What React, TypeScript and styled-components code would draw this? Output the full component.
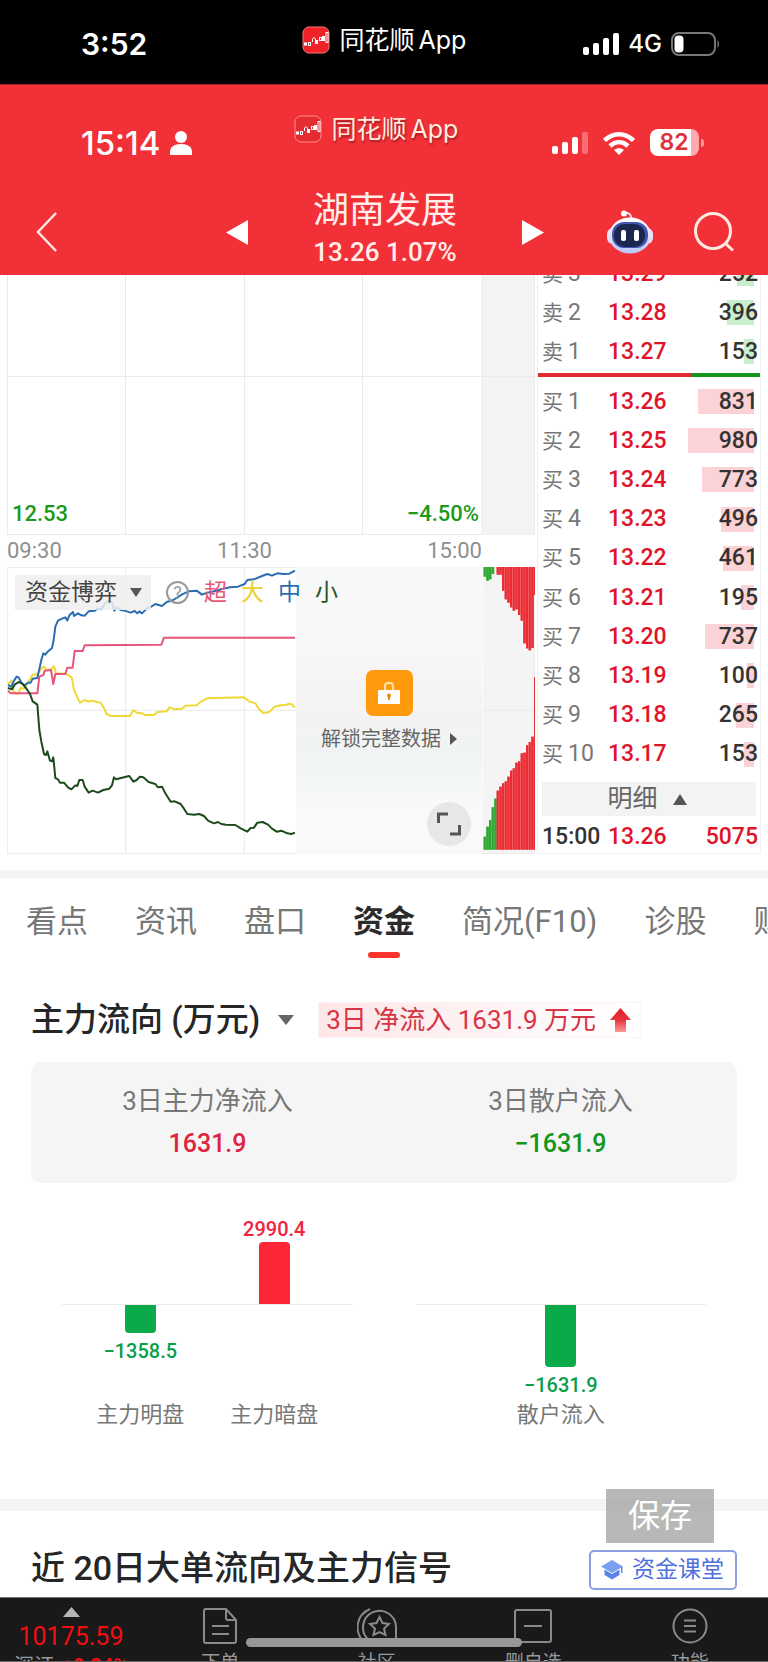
import React from 'react';
import styled, { createGlobalStyle } from 'styled-components';

const GlobalStyle = createGlobalStyle`
  * { box-sizing: border-box; }
  body {
    margin: 0;
    background: #fff;
    color: #333;
    font-family: Roboto, 'Noto Sans CJK SC', sans-serif;
  }
  button { border: 0; padding: 0; background: none; color: inherit; font: inherit; }
  h1, h2, p { margin: 0; font-weight: inherit; }
  svg { display: block; flex: none; }
`;

const Page = styled.div`
  min-height: 100vh;
  overflow: hidden;
  background: #fff;
`;

/* ---------- status bars and header ---------- */

const StatusRow = styled.div<{ $height: number; $top: number }>`
  display: grid;
  grid-template-columns: 1fr auto 1fr;
  align-items: center;
  height: ${(p) => p.$height}px;
  padding-top: ${(p) => p.$top}px;
  color: #fff;
`;

const DeviceBar = styled.div`
  background: #000;
`;

const Clock = styled.div<{ $weight: number; $size: number }>`
  display: flex;
  align-items: center;
  gap: 10px;
  padding-left: 81px;
  font: ${(p) => p.$weight} ${(p) => p.$size}px/32px Inter, sans-serif;
`;

const Brand = styled.div<{ $lift: number; $shift?: number; $faded?: boolean }>`
  display: flex;
  align-items: center;
  gap: 10px;
  padding-bottom: ${(p) => p.$lift}px;
  padding-right: ${(p) => p.$shift ?? 0}px;
  font: 400 25px/30px Inter, 'Noto Sans CJK SC', sans-serif;
  white-space: nowrap;
  color: ${(p) => (p.$faded ? '#ffeee0' : '#fff')};
  text-shadow: ${(p) => (p.$faded ? '1px 2px 2px rgba(110, 20, 20, 0.6)' : 'none')};
`;

const BrandName = styled.span`
  display: flex;
  gap: 4px;
`;

const Signals = styled.div<{ $right: number; $gap: number }>`
  display: flex;
  justify-content: flex-end;
  align-items: center;
  gap: ${(p) => p.$gap}px;
  padding-right: ${(p) => p.$right}px;
  font: 500 24px/28px Inter, sans-serif;
`;

const Header = styled.header`
  background: #f23038;
  color: #fff;
  border-top: 1px solid #a3242a;
`;

const TitleRow = styled.div`
  display: grid;
  grid-template-columns: 1fr 274px 1fr;
  align-items: center;
  height: 104px;
  padding: 12px 34px 0 36px;
`;

const Side = styled.div`
  display: flex;
  align-items: center;
  justify-content: space-between;
  padding-top: 6px;
`;

const Actions = styled.div`
  display: flex;
  align-items: center;
  gap: 40px;
`;

const Stock = styled.div`
  text-align: center;
  color: #ffeeea;
`;

const StockName = styled.h1`
  font-size: 36px;
  line-height: 46px;
`;

const StockQuote = styled.p`
  font-size: 26px;
  line-height: 36px;
  font-weight: 500;
`;

/* ---------- market area ---------- */

const Market = styled.section`
  display: grid;
  grid-template-columns: 528fr 224fr;
  column-gap: 2px;
  padding: 0 7px;
  margin-bottom: 16px;
`;

const PriceChart = styled.div`
  position: relative;
  height: 260px;
  display: flex;
  justify-content: space-between;
  align-items: flex-end;
  padding: 0 56px 6px 5px;
  color: #1a9a1a;
  font-size: 22px;
  font-weight: 500;
  line-height: 30px;
`;

const ChartCanvas = styled.svg`
  position: absolute;
  inset: 0;
  width: 100%;
  height: 100%;
  z-index: -1;
`;

const Layer = styled.div`
  position: relative;
  z-index: 0;
`;

const TimeAxis = styled.div`
  display: flex;
  justify-content: space-between;
  height: 32px;
  padding-right: 53px;
  color: #8f8f8f;
  font-size: 22px;
  line-height: 32px;
`;

const FundChart = styled.div`
  position: relative;
  height: 287px;
`;

const FundTools = styled.div`
  position: absolute;
  z-index: 2;
  top: 8px;
  left: 8px;
  display: flex;
  align-items: center;
  gap: 15px;
  font-size: 23px;
`;

const FundPicker = styled.button`
  display: flex;
  align-items: center;
  gap: 13px;
  height: 35px;
  padding: 0 9px 0 10px;
  background: rgba(238, 238, 238, 0.85);
  color: #444;
  line-height: 34px;
`;

const HelpMark = styled.button`
  width: 23px;
  height: 23px;
  border: 2px solid #999;
  border-radius: 50%;
  color: #999;
  font-size: 18px;
  line-height: 20px;
`;

const Legend = styled.div`
  display: flex;
  gap: 14px;
  line-height: 34px;
`;

const LegendKey = styled.span<{ $color: string }>`
  color: ${(p) => p.$color};
`;

const LockedArea = styled.div`
  position: absolute;
  top: 0;
  bottom: 0;
  left: 54.7%;
  right: 10%;
  display: flex;
  flex-direction: column;
  align-items: center;
  justify-content: center;
  gap: 8px;
  padding-top: 3px;
  background: linear-gradient(180deg, #f8f9fa 0%, #f9f7f7 25%, #f5f2f2 48%, #f0f4f4 66%, #f8f9f9 82%, #f9f9f9 100%);
`;

const UnlockButton = styled.button`
  display: flex;
  align-items: center;
  gap: 9px;
  color: #666;
  font-size: 20px;
  line-height: 30px;
  white-space: nowrap;
`;

const LockBadge = styled.div`
  display: grid;
  place-items: center;
  width: 47px;
  height: 46px;
  border-radius: 7px;
  background: #ff9a0c;
`;

const ExpandButton = styled.button`
  position: absolute;
  right: 11px;
  bottom: 8px;
  display: grid;
  place-items: center;
  width: 44px;
  height: 44px;
  border-radius: 50%;
  background: #e7e7e7;
`;

/* ---------- order book ---------- */

const Book = styled.div`
  display: flex;
  flex-direction: column;
  border: 1px solid #f0f0f0;
  border-width: 0 1px 1px;
`;

const SellClip = styled.div`
  display: flex;
  flex-direction: column;
  justify-content: flex-end;
  height: 96px;
  overflow: hidden;
`;

const BookTable = styled.table<{ $height: number }>`
  flex: none;
  width: 100%;
  height: ${(p) => p.$height}px;
  border-collapse: collapse;
  table-layout: fixed;
  font-size: 23px;
  td, th { padding: 0; text-align: left; font-weight: 500; line-height: 30px; }
`;

const LevelCell = styled.th<{ $strong?: boolean }>`
  width: 70px;
  && {
    padding-left: 4px;
    font-weight: ${(p) => (p.$strong ? 500 : 400)};
    color: ${(p) => (p.$strong ? '#333' : '#777')};
    white-space: nowrap;
  }
`;

const LevelName = styled.span`
  margin-right: 5px;
  font-size: 21px;
`;

const PriceCell = styled.td`
  color: #e01428;
`;

const VolumeCell = styled.td`
  color: #333;
`;

const Depth = styled.span<{ $tint: string }>`
  display: flex;
  justify-content: flex-end;
  align-items: center;
  height: 26px;
  padding-right: 2px;
  background-image: linear-gradient(${(p) => p.$tint}, ${(p) => p.$tint});
  background-repeat: no-repeat;
  background-position: right 6px center;
`;

const Ratio = styled.div`
  height: 4px;
  margin: 2px 0 5px;
  background: linear-gradient(90deg, #e02c34 69%, #12961c 69%);
`;

const DetailToggle = styled.button`
  display: flex;
  align-items: center;
  justify-content: center;
  gap: 15px;
  height: 34px;
  margin: 8px 4px 4px;
  padding-right: 4px;
  background: #f3f3f3;
  color: #666;
  font-size: 25px;
  line-height: 34px;
`;

const TradeTotal = styled.td`
  && { text-align: right; padding-right: 2px; }
  color: #e01428;
`;

/* ---------- fund section ---------- */

const Band = styled.div<{ $height: number }>`
  height: ${(p) => p.$height}px;
  background: #f4f4f4;
`;

const Tabs = styled.nav`
  display: flex;
  gap: 47px;
  padding-left: 26px;
  overflow: hidden;
`;

const Tab = styled.button<{ $active?: boolean }>`
  position: relative;
  flex: none;
  padding: 22px 0 14px;
  font-size: 31px;
  line-height: 44px;
  font-weight: ${(p) => (p.$active ? 700 : 400)};
  color: ${(p) => (p.$active ? '#2b2b2b' : '#777')};
  &::after {
    content: '';
    display: ${(p) => (p.$active ? 'block' : 'none')};
    position: absolute;
    bottom: 0;
    left: calc(50% - 16px);
    width: 32px;
    height: 6px;
    border-radius: 3px;
    background: #fb342c;
  }
`;

const FlowHeading = styled.div`
  display: flex;
  align-items: center;
  gap: 24px;
  margin: 44px 31px 24px;
  height: 36px;
  white-space: nowrap;
`;

const FlowPicker = styled.button`
  display: flex;
  align-items: center;
  gap: 18px;
  color: #262626;
  font-size: 33px;
  line-height: 36px;
  font-weight: 500;
`;

const FlowTag = styled.p`
  display: flex;
  align-items: center;
  gap: 14px;
  height: 36px;
  padding: 0 10px 0 7px;
  border: 1px solid #fdf2f3;
  background: linear-gradient(90deg, #fde6e8, #fff);
  color: #d83446;
  font-size: 26px;
  line-height: 34px;
`;

const Summary = styled.dl`
  display: grid;
  grid-template-columns: 1fr 1fr;
  margin: 0 31px;
  padding: 21px 0;
  border-radius: 10px;
  background: #f5f5f5;
  text-align: center;
  line-height: 36px;
`;

const SummaryLabel = styled.dt`
  color: #777;
  font-size: 26px;
`;

const Amount = styled.dd<{ $down?: boolean }>`
  margin: 7px 0 0;
  color: ${(p) => (p.$down ? '#12961c' : '#e02440')};
  font-size: 25px;
  font-weight: 500;
`;

const FlowCharts = styled.div`
  display: grid;
  grid-template-columns: 1fr 1fr;
  gap: 63px;
  padding: 0 62px 69px;
`;

const PlotRow = styled.div<{ $height: number; $base?: boolean }>`
  display: flex;
  justify-content: center;
  gap: 48px;
  height: ${(p) => p.$height}px;
  border-bottom: ${(p) => (p.$base ? '1px solid #ececec' : '0')};
  color: #777;
  font-size: 22px;
  line-height: 30px;
`;

const PlotCell = styled.div<{ $end?: boolean }>`
  display: flex;
  flex-direction: column;
  align-items: center;
  justify-content: ${(p) => (p.$end ? 'flex-end' : 'flex-start')};
  width: 86px;
  white-space: nowrap;
`;

const Bar = styled.div<{ $up?: boolean }>`
  width: 31px;
  background: ${(p) => (p.$up ? '#fd2638' : '#0aaa4b')};
  border-radius: ${(p) => (p.$up ? '4px 4px 0 0' : '0 0 4px 4px')};
`;

const BarValue = styled.span<{ $up?: boolean }>`
  margin: ${(p) => (p.$up ? '0 0 1px' : '6px 0 0')};
  color: ${(p) => (p.$up ? '#f0243c' : '#0aa04a')};
  font-size: 20px;
  font-weight: 500;
  line-height: 24px;
`;

const SignalSection = styled.section`
  position: relative;
  display: flex;
  justify-content: space-between;
  align-items: flex-start;
  padding: 39px 31px 7px;
`;

const SignalTitle = styled.h2`
  color: #262626;
  font-size: 34px;
  font-weight: 500;
  line-height: 36px;
  white-space: nowrap;
`;

const LessonLink = styled.a`
  display: flex;
  align-items: center;
  gap: 9px;
  height: 40px;
  padding: 0 11px 0 10px;
  border: 2px solid #8b9fe0;
  border-radius: 5px;
  color: #4f6fdc;
  font-size: 23px;
  line-height: 34px;
  text-decoration: none;
  white-space: nowrap;
`;

const SaveButton = styled.button`
  position: absolute;
  top: -22px;
  right: 54px;
  width: 108px;
  height: 54px;
  background: rgba(160, 160, 160, 0.75);
  color: #fff;
  font-size: 32px;
  line-height: 54px;
`;

/* ---------- bottom bar ---------- */

const BottomBar = styled.footer`
  position: relative;
  display: flex;
  height: 65px;
  overflow: hidden;
  border-top: 1px solid #777;
  border-bottom: 1px solid #666;
  background: #191919;
  color: #999;
`;

const IndexTicker = styled.button`
  display: flex;
  flex-direction: column;
  align-items: center;
  justify-content: flex-start;
  flex: none;
  width: 142px;
  padding-top: 9px;
  white-space: nowrap;
`;

const IndexValue = styled.span`
  margin-top: 6px;
  color: #f40d10;
  font-size: 25px;
  line-height: 28px;
`;

const IndexChange = styled.span`
  display: flex;
  gap: 8px;
  margin-top: 1px;
  font-size: 20px;
  line-height: 28px;
`;

const Rise = styled.b`
  color: #f40d10;
`;

const BottomItem = styled.button`
  display: flex;
  flex: 1;
  flex-direction: column;
  align-items: center;
  justify-content: flex-start;
  padding-top: 10px;
  font-size: 19px;
  line-height: 28px;
`;

const BottomLabel = styled.span`
  margin-top: 5px;
`;

const HomeIndicator = styled.div`
  position: absolute;
  bottom: 14px;
  left: 32%;
  right: 32%;
  height: 9px;
  border-radius: 5px;
  background: #989898;
`;

/* ---------- icons ---------- */

const AppIcon = ({ faded }: { faded?: boolean }) => (
  <svg width="28" height="28" viewBox="0 0 28 28" fill="none">
    <rect x="1" y="1" width="26" height="26" rx="6" fill={faded ? '#e62c33' : '#ee2327'} stroke={faded ? '#ff8d8a' : '#f77'} strokeWidth="1" />
    <g stroke="#fff" strokeWidth="1">
      <rect x="2.5" y="17" width="2" height="2" fill="#fff" />
      <rect x="6.5" y="16.5" width="2" height="3" />
      <path d="M10.500 16v-3l1.500-1.500 1.500 1.500v3" />
      <rect x="13.500" y="14.500" width="2" height="3" fill="#fff" />
      <rect x="17.500" y="11.500" width="2" height="3" />
      <rect x="20.500" y="10.500" width="2" height="4" fill="#fff" />
      <rect x="24" y="6.500" width="2" height="10" />
    </g>
  </svg>
);

const SignalIcon = ({ weak }: { weak?: boolean }) => (
  <svg width="36" height="22" viewBox="0 0 36 22" fill="#fff">
    <rect x="0" y="14" width="6" height="8" rx="2" />
    <rect x="10" y="10" width="6" height="12" rx="2" />
    <rect x="20" y="5" width="6" height="17" rx="2" />
    <rect x="30" y="0" width="6" height="22" rx="2" opacity={weak ? 0.3 : 1} />
  </svg>
);

const LowBattery = () => (
  <svg width="49" height="24" viewBox="0 0 49 24" fill="none">
    <rect x="1" y="1" width="43" height="22" rx="7" stroke="#777" strokeWidth="2" />
    <rect x="3.500" y="3.500" width="9" height="17" rx="4" fill="#fff" />
    <path d="M46.500 8c2 1.500 2 6.500 0 8z" fill="#777" />
  </svg>
);

const BatteryBody = styled.span`
  display: flex;
  align-items: center;
  gap: 2px;
`;

const BatteryLevel = styled.span`
  width: 49px;
  height: 27px;
  padding-right: 1px;
  border-radius: 8px;
  background: linear-gradient(90deg, #fff 83%, #ffaaac 83%);
  color: #e0323a;
  font: 600 23px/27px Inter, sans-serif;
  text-align: center;
`;

const BatteryTip = styled.span`
  width: 3px;
  height: 8px;
  border-radius: 0 3px 3px 0;
  background: #ff9a9c;
`;

const PersonIcon = () => (
  <svg width="22" height="24" viewBox="0 0 22 24" fill="#fff">
    <circle cx="11" cy="6" r="6" />
    <path d="M0 24v-3c0-5 4-8 11-8s11 3 11 8v3z" />
  </svg>
);

const WifiIcon = () => (
  <svg width="32" height="24" viewBox="0 0 32 24" fill="none" stroke="#fff" strokeWidth="4.500">
    <path d="M1.500 9.500C10 1 22 1 30.500 9.500" />
    <path d="M7 15c5.500-5 12.500-5 18 0" />
    <path d="M16 24l-5-5c3-2.500 7-2.500 10 0z" fill="#fff" stroke="none" />
  </svg>
);

const BackIcon = () => (
  <svg width="22" height="40" viewBox="0 0 22 40" fill="none" stroke="#ffe7e0" strokeWidth="2.500">
    <path d="M20 1L2 20l18 19" />
  </svg>
);

type TriangleProps = { w: number; h: number; dir: 'up' | 'down' | 'left' | 'right'; color: string };

const Triangle = ({ w, h, dir, color }: TriangleProps) => {
  const points = {
    up: `0,${h} ${w},${h} ${w / 2},0`,
    down: `0,0 ${w},0 ${w / 2},${h}`,
    left: `${w},0 ${w},${h} 0,${h / 2}`,
    right: `0,0 0,${h} ${w},${h / 2}`,
  }[dir];
  return (
    <svg width={w} height={h} viewBox={`0 0 ${w} ${h}`}>
      <polygon points={points} fill={color} />
    </svg>
  );
};

const RobotIcon = () => (
  <svg width="48" height="44" viewBox="0 0 48 44">
    <defs>
      <linearGradient id="shell" x1="0" y1="0" x2="0" y2="1">
        <stop offset="0" stopColor="#fff" />
        <stop offset="0.6" stopColor="#dcd9fb" />
        <stop offset="1" stopColor="#b9c6f5" />
      </linearGradient>
    </defs>
    <path d="M18 3.500c4-1.500 7 0 7.500 5" fill="none" stroke="#f5d9e2" strokeWidth="2" />
    <circle cx="18" cy="3.500" r="3" fill="#fff" />
    <rect x="1" y="18" width="46" height="16" rx="6" fill="#e6e2fb" />
    <ellipse cx="24" cy="25.500" rx="21" ry="18" fill="url(#shell)" />
    <rect x="6" y="12" width="36" height="26" rx="12" fill="#4355ac" />
    <rect x="8" y="14" width="31" height="23" rx="11" fill="#1c2750" />
    <rect x="15" y="20" width="5" height="11" rx="2" fill="#fff" />
    <rect x="28" y="20" width="5" height="11" rx="2" fill="#fff" />
  </svg>
);

const SearchIcon = () => (
  <svg width="40" height="40" viewBox="0 0 40 40" fill="none" stroke="#ffeae2" strokeWidth="3">
    <circle cx="19" cy="19" r="17.500" />
    <path d="M31 31l8 7.500" />
  </svg>
);

const LockIcon = () => (
  <svg width="22" height="22" viewBox="0 0 22 22">
    <path d="M7 8V4q0-3 3-3h2q3 0 3 3v4" fill="none" stroke="#ffe3b0" strokeWidth="2" />
    <rect x="0" y="8" width="22" height="14" rx="1" fill="#fff" />
    <circle cx="11" cy="13.500" r="2" fill="#f08c00" />
    <rect x="10" y="14" width="2" height="4" fill="#f08c00" />
  </svg>
);

const ExpandIcon = () => (
  <svg width="24" height="24" viewBox="0 0 24 24" fill="none" stroke="#555" strokeWidth="3">
    <path d="M1.500 11V2H11M22.500 13v9H13" />
  </svg>
);

const RiseArrow = () => (
  <svg width="21" height="24" viewBox="0 0 21 24">
    <defs>
      <linearGradient id="rise" x1="0" y1="0" x2="0" y2="1">
        <stop offset="0" stopColor="#e01d28" />
        <stop offset="0.5" stopColor="#e8343c" />
        <stop offset="1" stopColor="#f79a9a" />
      </linearGradient>
    </defs>
    <path d="M10.500 0L21 12h-5v12h-11V12H0z" fill="url(#rise)" />
  </svg>
);

const CapIcon = () => (
  <svg width="22" height="20" viewBox="0 0 22 20" fill="#5b82e8">
    <path d="M11 0l11 6.500L11 13 0 6.500z" fill="#7ba0f0" />
    <path d="M3.500 9.500L11 14l7.500-4.500V15L11 19.500 3.500 15z" />
    <path d="M20 7h1.500v6H20z" />
  </svg>
);

const line = { fill: 'none', stroke: '#8a8a8a', strokeWidth: 2 };

const OrderIcon = () => (
  <svg width="34" height="36" viewBox="0 0 34 36" {...line}>
    <path d="M23 1H3Q1 1 1 3v30q0 2 2 2h28q2 0 2-2V12zM23 1v9q0 2 2 2h8M9 18h17M9 26h17" />
  </svg>
);

const CommunityIcon = () => (
  <svg width="40" height="36" viewBox="0 0 40 36" {...line}>
    <path d="M13 1C-1 7-3 23 6 33M39 33V19A16.500 16.500 0 1 0 12 32h27" />
    <path d="M22.500 9l3 6 6.500 1-5 4.500 1.500 6.500-6-3-6 3 1.500-6.500-5-4.500 6.500-1z" />
  </svg>
);

const RemoveIcon = () => (
  <svg width="38" height="36" viewBox="0 0 38 36" {...line}>
    <rect x="1" y="2" width="36" height="32" rx="2" />
    <path d="M10 18h18" />
  </svg>
);

const MenuIcon = () => (
  <svg width="36" height="36" viewBox="0 0 36 36" {...line}>
    <circle cx="18" cy="18" r="16.500" />
    <path d="M12 12.500h12M12 18h12M12 23.500h12" />
  </svg>
);

/* ---------- data ---------- */

type Level = { side: string; n: number; price: string; volume: number };

const sells: Level[] = [
  { side: '卖', n: 3, price: '13.29', volume: 252 },
  { side: '卖', n: 2, price: '13.28', volume: 396 },
  { side: '卖', n: 1, price: '13.27', volume: 153 },
];

const buys: Level[] = [831, 980, 773, 496, 461, 195, 737, 100, 265, 153].map((volume, i) => ({
  side: '买',
  n: i + 1,
  price: (13.26 - i / 100).toFixed(2),
  volume,
}));

const greenTop = [50, 62, 58, 42];
const redTop = [44, 44, 92, 118, 128, 142, 152, 148, 165, 182, 250, 265, 271, 264, 105];
const greenBottom = [830, 800, 780, 742, 716];
const redBottom = [692, 680, 670, 664, 650, 632, 625, 608, 604, 580, 578, 556, 546, 530, 352];

const mediumFlow =
  '24,375 34,380 42,362 50,350 56,352 64,368 74,376 84,368 92,368 98,356 112,354 116,336 124,300 130,280 136,284 142,276 156,264 161,240 166,200 174,182 186,176 196,172 202,181 208,166 219,156 222,168 234,160 244,166 254,167 266,154 284,152 294,146 304,148 314,132 324,122 336,126 343,152 350,142 362,150 374,152 392,158 404,153 412,160 418,154 426,160 440,146 454,140 466,132 486,138 500,126 520,120 545,104 566,94 590,92 606,104 622,98 642,94 664,88 690,82 714,80 734,72 742,60 762,58 786,48 802,42 816,47 832,40 850,42 868,41 885,32';
const superFlow =
  '24,392 32,400 112,400 118,350 130,345 134,332 153,330 160,372 166,342 196,342 202,323 218,323 224,273 248,273 254,256 484,254 492,233 885,233';
const largeFlow =
  '24,372 34,362 42,396 54,402 62,384 72,386 84,366 98,344 112,342 124,326 132,320 140,330 154,328 162,318 168,340 196,341 206,346 216,354 222,390 232,412 240,428 254,420 264,425 276,422 302,428 312,444 320,462 332,468 390,468 400,450 410,458 426,460 434,465 462,465 472,456 500,454 508,442 524,448 546,446 556,437 590,436 604,424 622,415 732,412 748,424 766,430 776,446 790,459 808,456 824,440 842,436 858,435 868,431 876,433 885,443';
const smallFlow =
  '24,384 36,388 44,374 56,366 66,370 78,384 90,402 98,424 112,434 118,510 124,545 132,582 138,585 142,574 150,602 156,604 160,592 166,654 174,658 180,668 192,668 204,682 214,688 226,676 232,678 238,660 248,660 254,680 266,698 278,692 294,698 310,690 328,686 336,676 342,652 348,658 372,652 388,648 400,665 410,660 420,650 430,652 446,666 466,672 474,682 486,680 496,700 512,725 524,724 542,732 552,746 562,762 582,764 598,762 612,768 624,782 642,790 654,786 664,792 678,794 706,795 722,805 742,815 752,804 762,803 772,788 788,786 804,794 816,806 830,815 844,812 862,820 874,822 885,818';

/* ---------- parts ---------- */

const LevelRows = ({ levels, tint }: { levels: Level[]; tint: string }) => (
  <tbody>
    {levels.map((l) => (
      <tr key={l.n}>
        <LevelCell scope="row">
          <LevelName>{l.side}</LevelName>
          {l.n}
        </LevelCell>
        <PriceCell>{l.price}</PriceCell>
        <VolumeCell>
          <Depth $tint={tint} style={{ backgroundSize: `${Math.round(l.volume * 0.067)}px 25px` }}>
            {l.volume}
          </Depth>
        </VolumeCell>
      </tr>
    ))}
  </tbody>
);

const OrderBook = () => (
  <Book>
    <SellClip>
      <BookTable $height={117}>
        <LevelRows levels={sells} tint="#c9eecb" />
      </BookTable>
    </SellClip>
    <Ratio />
    <BookTable $height={392}>
      <LevelRows levels={buys} tint="#fbd2d6" />
    </BookTable>
    <DetailToggle type="button">
      明细
      <Triangle w={14} h={11} dir="up" color="#555" />
    </DetailToggle>
    <BookTable $height={33}>
      <tbody>
        <tr>
          <LevelCell scope="row" $strong>15:00</LevelCell>
          <PriceCell>13.26</PriceCell>
          <TradeTotal>5075</TradeTotal>
        </tr>
      </tbody>
    </BookTable>
  </Book>
);

const PricePanel = () => (
  <Layer>
    <PriceChart>
      <ChartCanvas viewBox="0 0 528 260" preserveAspectRatio="none">
        <rect x="475" y="0" width="53" height="260" fill="#f3f3f3" />
        <path d="M.5 0V260M118.500 0V260M237.500 0V260M355.500 0V260M475 0V260M527.500 0V260M0 101.500H528M0 259.500H475" stroke="#ebebeb" fill="none" />
      </ChartCanvas>
      <span>12.53</span>
      <span>−4.50%</span>
    </PriceChart>
    <TimeAxis>
      <span>09:30</span>
      <span>11:30</span>
      <span>15:00</span>
    </TimeAxis>
  </Layer>
);

const columns = (tops: number[], x: number, color: string, gapColor: string, base: number) =>
  tops.map((t, i) => (
    <g key={`${x}-${i}`}>
      <rect x={x + i * 8} y={Math.min(t, base)} width="8" height={Math.abs(base - t)} fill={gapColor} />
      <rect x={x + i * 8} y={Math.min(t, base)} width="6" height={Math.abs(base - t)} fill={color} />
    </g>
  ));

const FundPanel = () => (
  <Layer>
    <FundChart>
      <ChartCanvas viewBox="21 21 1584 861" preserveAspectRatio="none">
        <rect x="1448" y="21" width="157" height="861" fill="#f4f4f4" />
        <path d="M22 21V881M377 21V881M733 21V881M1603 21V881M21 451H1605M21 22H1605M21 880H1605" stroke="#ebebeb" strokeWidth="3" fill="none" />
        <g fill="none" strokeWidth="6" strokeLinejoin="round">
          <polyline points={largeFlow} stroke="#f0d936" />
          <polyline points={superFlow} stroke="#e8557a" />
          <polyline points={mediumFlow} stroke="#2a6db2" />
          <polyline points={smallFlow} stroke="#1d4a1c" />
        </g>
        {columns(greenTop, 1451, '#2fa732', '#4fb552', 21)}
        {columns(redTop, 1490, '#e82c34', '#ee555b', 21)}
        {columns(greenBottom, 1451, '#2fa732', '#4fb552', 869)}
        {columns(redBottom, 1490, '#e82c34', '#ee555b', 869)}
      </ChartCanvas>
      <LockedArea>
        <LockBadge>
          <LockIcon />
        </LockBadge>
        <UnlockButton type="button">
          解锁完整数据
          <Triangle w={7} h={12} dir="right" color="#555" />
        </UnlockButton>
        <ExpandButton type="button" aria-label="全屏">
          <ExpandIcon />
        </ExpandButton>
      </LockedArea>
      <FundTools>
        <FundPicker type="button" aria-haspopup="listbox">
          资金博弈
          <Triangle w={12} h={9} dir="down" color="#555" />
        </FundPicker>
        <HelpMark type="button">?</HelpMark>
        <Legend>
          <LegendKey $color="#ea5578">超</LegendKey>
          <LegendKey $color="#ecd02e">大</LegendKey>
          <LegendKey $color="#2a6db2">中</LegendKey>
          <LegendKey $color="#2a5426">小</LegendKey>
        </Legend>
      </FundTools>
    </FundChart>
  </Layer>
);

const tabs = ['看点', '资讯', '盘口', '资金', '简况(F10)', '诊股', '财务'];

const bottomItems = [
  { label: '下单', icon: <OrderIcon /> },
  { label: '社区', icon: <CommunityIcon /> },
  { label: '删自选', icon: <RemoveIcon /> },
  { label: '功能', icon: <MenuIcon /> },
];

type Flow = { name: string; value: string; size: number; up?: boolean };

const FlowChart = ({ flows }: { flows: Flow[] }) => (
  <div>
    <PlotRow $height={122} $base>
      {flows.map((f) => (
        <PlotCell key={f.name} $end>
          {f.up && <BarValue $up>{f.value}</BarValue>}
          {f.up && <Bar $up style={{ height: f.size }} />}
        </PlotCell>
      ))}
    </PlotRow>
    <PlotRow $height={95}>
      {flows.map((f) => (
        <PlotCell key={f.name}>
          {!f.up && <Bar style={{ height: f.size }} />}
          {!f.up && <BarValue>{f.value}</BarValue>}
        </PlotCell>
      ))}
    </PlotRow>
    <PlotRow $height={30}>
      {flows.map((f) => (
        <PlotCell key={f.name}>{f.name}</PlotCell>
      ))}
    </PlotRow>
  </div>
);

export default function App() {
  return (
    <Page>
      <GlobalStyle />
      <DeviceBar>
        <StatusRow $height={84} $top={4}>
          <Clock $weight={600} $size={30}>3:52</Clock>
          <Brand $lift={8}>
            <AppIcon />
            <BrandName>
              <span>同花顺</span>
              <span>App</span>
            </BrandName>
          </Brand>
          <Signals $right={48} $gap={9}>
            <SignalIcon />
            4G
            <LowBattery />
          </Signals>
        </StatusRow>
      </DeviceBar>

      <Header>
        <StatusRow $height={86} $top={29}>
          <Clock $weight={500} $size={33}>
            15:14
            <PersonIcon />
          </Clock>
          <Brand $lift={27} $shift={16} $faded>
            <AppIcon faded />
            <BrandName>
              <span>同花顺</span>
              <span>App</span>
            </BrandName>
          </Brand>
          <Signals $right={64} $gap={15}>
            <SignalIcon weak />
            <WifiIcon />
            <BatteryBody>
              <BatteryLevel>82</BatteryLevel>
              <BatteryTip />
            </BatteryBody>
          </Signals>
        </StatusRow>
        <TitleRow>
          <Side>
            <button type="button" aria-label="返回"><BackIcon /></button>
            <button type="button" aria-label="上一只"><Triangle w={22} h={25} dir="left" color="#fff" /></button>
          </Side>
          <Stock>
            <StockName>湖南发展</StockName>
            <StockQuote>13.26 1.07%</StockQuote>
          </Stock>
          <Side>
            <button type="button" aria-label="下一只"><Triangle w={22} h={25} dir="right" color="#fff" /></button>
            <Actions>
              <button type="button" aria-label="助手"><RobotIcon /></button>
              <button type="button" aria-label="搜索"><SearchIcon /></button>
            </Actions>
          </Side>
        </TitleRow>
      </Header>

      <Market>
        <div>
          <PricePanel />
          <FundPanel />
        </div>
        <OrderBook />
      </Market>

      <Band $height={8} />
      <Tabs>
        {tabs.map((t) => (
          <Tab key={t} type="button" $active={t === '资金'}>{t}</Tab>
        ))}
      </Tabs>

      <FlowHeading>
        <FlowPicker type="button" aria-haspopup="listbox">
          主力流向 (万元)
          <Triangle w={16} h={10} dir="down" color="#666" />
        </FlowPicker>
        <FlowTag>
          3日 净流入 1631.9 万元
          <RiseArrow />
        </FlowTag>
      </FlowHeading>

      <Summary>
        <div>
          <SummaryLabel>3日主力净流入</SummaryLabel>
          <Amount>1631.9</Amount>
        </div>
        <div>
          <SummaryLabel>3日散户流入</SummaryLabel>
          <Amount $down>−1631.9</Amount>
        </div>
      </Summary>

      <FlowCharts>
        <FlowChart
          flows={[
            { name: '主力明盘', value: '−1358.5', size: 28 },
            { name: '主力暗盘', value: '2990.4', size: 62, up: true },
          ]}
        />
        <FlowChart flows={[{ name: '散户流入', value: '−1631.9', size: 62 }]} />
      </FlowCharts>

      <Band $height={12} />
      <SignalSection>
        <SignalTitle>近 20日大单流向及主力信号</SignalTitle>
        <LessonLink href="#lesson">
          <CapIcon />
          资金课堂
        </LessonLink>
        <SaveButton type="button">保存</SaveButton>
      </SignalSection>

      <BottomBar>
        <IndexTicker type="button">
          <Triangle w={17} h={10} dir="up" color="#b5b5b5" />
          <IndexValue>10175.59</IndexValue>
          <IndexChange>
            深证 <Rise>+0.24%</Rise>
          </IndexChange>
        </IndexTicker>
        {bottomItems.map((item) => (
          <BottomItem key={item.label} type="button">
            {item.icon}
            <BottomLabel>{item.label}</BottomLabel>
          </BottomItem>
        ))}
        <HomeIndicator />
      </BottomBar>
    </Page>
  );
}
